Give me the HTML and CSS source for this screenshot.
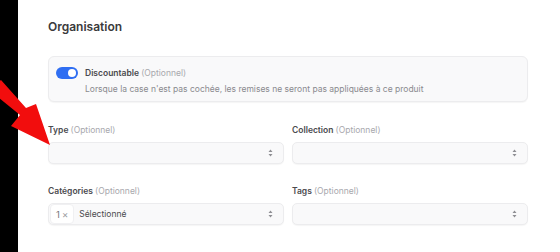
FILE: index.html
```html
<!DOCTYPE html>
<html lang="fr">
<head>
    <meta charset="UTF-8">
    <title>Organisation</title>
    <link rel="stylesheet" href="styles.css">
</head>
<body>
    <div class="page">
        <div class="sidebar"></div>
        <div class="panel">
            <h2 class="title">Organisation</h2>

            <div class="switch-card">
                <span class="toggle"><span class="knob"></span></span>
                <div class="switch-text">
                    <div class="switch-label">Discountable <span class="opt">(Optionnel)</span></div>
                    <div class="switch-hint">Lorsque la case n'est pas cochée, les remises ne seront pas appliquées à ce produit</div>
                </div>
            </div>

            <div class="fields">
                <div class="field">
                    <label class="label">Type <span class="opt">(Optionnel)</span></label>
                    <div class="select">
                        <span class="value"></span>
                        <svg class="chevron" width="5" height="8" viewBox="0 0 5 8"><path d="M2.5 0.5L4.5 3H0.5Z M2.5 7.5L4.5 5H0.5Z" fill="#8e8e93"/></svg>
                    </div>
                </div>
                <div class="field">
                    <label class="label">Collection <span class="opt">(Optionnel)</span></label>
                    <div class="select">
                        <span class="value"></span>
                        <svg class="chevron" width="5" height="8" viewBox="0 0 5 8"><path d="M2.5 0.5L4.5 3H0.5Z M2.5 7.5L4.5 5H0.5Z" fill="#8e8e93"/></svg>
                    </div>
                </div>
                <div class="field">
                    <label class="label">Catégories <span class="opt">(Optionnel)</span></label>
                    <div class="select">
                        <span class="value">
                            <span class="chip">1 <span class="x">×</span></span>
                            Sélectionné
                        </span>
                        <svg class="chevron" width="5" height="8" viewBox="0 0 5 8"><path d="M2.5 0.5L4.5 3H0.5Z M2.5 7.5L4.5 5H0.5Z" fill="#8e8e93"/></svg>
                    </div>
                </div>
                <div class="field">
                    <label class="label">Tags <span class="opt">(Optionnel)</span></label>
                    <div class="select">
                        <span class="value"></span>
                        <svg class="chevron" width="5" height="8" viewBox="0 0 5 8"><path d="M2.5 0.5L4.5 3H0.5Z M2.5 7.5L4.5 5H0.5Z" fill="#8e8e93"/></svg>
                    </div>
                </div>
            </div>
        </div>
    </div>

    <svg class="arrow" width="60" height="160" viewBox="0 0 60 160">
        <polygon points="-6,86 1,80 26,108 36,104 50,145 11,126 20,115 -6,94" fill="#f20d0d"/>
    </svg>
</body>
</html>
```

FILE: styles.css
```css
body {
    margin: 0;
    font-family: Inter, "Noto Sans", sans-serif;
    background: #000;
    overflow: hidden;
}

.page {
    display: flex;
    height: 252px;
}

.sidebar {
    width: 18px;
    background: #000;
}

.panel {
    flex: 1;
    background: #fff;
    padding: 19px 32px 0 30px;
}

.title {
    margin: 0;
    font-size: 12px;
    line-height: 16px;
    font-weight: 600;
    color: #3a3a3c;
}

.switch-card {
    margin-top: 21px;
    height: 46px;
    box-sizing: border-box;
    display: flex;
    gap: 7px;
    padding: 9px 7px;
    background: #f9f9fa;
    border: 1px solid #ececee;
    border-radius: 6px;
    box-shadow: 0 1px 1px rgba(0,0,0,0.04);
}

.toggle {
    flex: none;
    width: 22px;
    height: 12px;
    margin-top: 1px;
    border-radius: 6px;
    background: #2f6ef2;
    position: relative;
}

.knob {
    position: absolute;
    right: 2px;
    top: 2px;
    width: 8px;
    height: 8px;
    border-radius: 50%;
    background: #fff;
}

.switch-label {
    font-size: 8.5px;
    line-height: 14px;
    font-weight: 600;
    color: #4a4a4e;
}

.switch-hint {
    font-size: 8.5px;
    line-height: 14px;
    color: #8a8a8f;
    margin-top: 2px;
}

.opt {
    font-weight: 400;
    color: #a8a8ad;
}

.fields {
    margin-top: 21px;
    display: grid;
    grid-template-columns: 1fr 1fr;
    column-gap: 8px;
    row-gap: 20px;
}

.label {
    display: block;
    font-size: 8.5px;
    line-height: 14px;
    font-weight: 600;
    color: #4a4a4e;
    margin-bottom: 5px;
}

.select {
    height: 22px;
    box-sizing: border-box;
    display: flex;
    align-items: center;
    justify-content: space-between;
    padding: 0 10px 0 1px;
    background: #f9f9fa;
    border: 1px solid #ececee;
    border-radius: 5px;
    box-shadow: 0 1px 1px rgba(0,0,0,0.04);
}

.value {
    display: flex;
    align-items: center;
    gap: 5px;
    font-size: 8.5px;
    color: #4a4a4e;
}

.chip {
    display: flex;
    align-items: center;
    gap: 2px;
    height: 20px;
    padding: 0 5px;
    background: #fff;
    border: 1px solid #f0f0f2;
    border-radius: 4px;
    box-sizing: border-box;
    font-size: 9.5px;
    color: #77777c;
}

.chip .x {
    color: #9a9aa0;
}

.arrow {
    position: absolute;
    left: 0;
    top: 0;
}
```
